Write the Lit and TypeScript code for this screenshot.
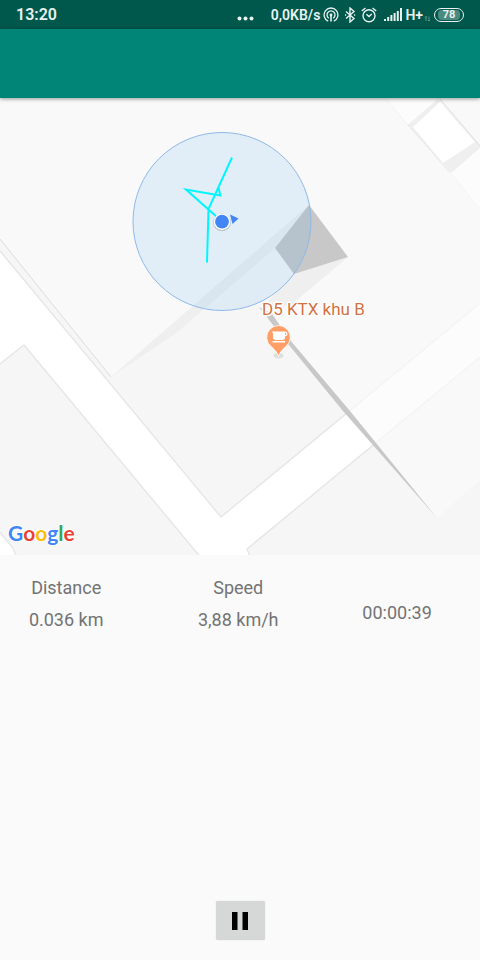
import { LitElement, html, css, svg } from "lit";
import { customElement, property, state } from "lit/decorators.js";

@customElement("status-bar")
class StatusBar extends LitElement {
  static styles = css`
    :host {
      display: flex;
      align-items: center;
      justify-content: space-between;
      height: 29px;
      padding: 0 16px;
      background: #00574b;
      color: #e8f2f0;
      font: 600 16px/20px Roboto, sans-serif;
      box-sizing: border-box;
    }
    .right {
      display: flex;
      align-items: center;
    }
    svg {
      display: block;
      fill: none;
      stroke: currentColor;
    }
    .solid {
      fill: currentColor;
      stroke: none;
    }
    .dots {
      margin-right: 17px;
    }
    .rate {
      font-size: 14px;
      margin-right: 3px;
    }
    .icons {
      display: flex;
      align-items: center;
      gap: 5px;
    }
    .signal {
      margin-left: 2px;
    }
    .net {
      font-size: 14px;
      margin-left: 3px;
    }
    .arrows {
      margin-right: 3px;
    }
    .battery {
      display: flex;
      align-items: center;
      justify-content: center;
      width: 30px;
      height: 14px;
      box-sizing: border-box;
      border: 1px solid currentColor;
      border-radius: 7px;
    }
    .charge {
      width: 22px;
      border-radius: 4px;
      background: #4a8a81;
      font-size: 11px;
      line-height: 10px;
      font-weight: 700;
      text-align: center;
    }
  `;

  render() {
    return html`
      <span>13:20</span>
      <div class="right">
        <svg class="dots solid" width="17" height="14" viewBox="0 0 17 14" aria-hidden="true">
          <circle cx="2.5" cy="10.5" r="2" /><circle cx="8.5" cy="10.5" r="2" /><circle cx="14.5" cy="10.5" r="2" />
        </svg>
        <span class="rate">0,0KB/s</span>
        <div class="icons">
          <svg width="16" height="16" viewBox="0 0 16 16" stroke-width="1.3" aria-hidden="true">
            <path d="M5.2 14.2a6.9 6.9 0 1 1 5.6 0" />
            <path d="M5.7 11.2a4 4 0 1 1 4.6 0" />
            <circle class="solid" cx="8" cy="8" r="1.4" />
            <path d="M8 9v5.5" stroke-width="1.6" />
          </svg>
          <svg width="12" height="16" viewBox="0 0 12 16" stroke-width="1.4" aria-hidden="true">
            <path d="M2 4.500 10 11.500 6 15V1l4 3.500L2 11.500" />
            <path d="M1 8h1.200M10 8h1.200" />
          </svg>
          <svg width="16" height="16" viewBox="0 0 16 16" stroke-width="1.4" aria-hidden="true">
            <circle cx="8" cy="8.7" r="6" />
            <path d="M.8 4 4.4 1M15.2 4 11.6 1" />
            <path d="M5.4 7.3 8 9.6l2.8-2.5" />
          </svg>
          <svg class="solid signal" width="18" height="13" viewBox="0 0 18 13" aria-hidden="true">
            <path d="M0 11h2v2H0zM3.2 9h2v4h-2zM6.4 7h2v6h-2zM9.6 5h2v8h-2zM12.8 3h2v10h-2zM16 0h2v13h-2z" />
          </svg>
        </div>
        <span class="net">H+</span>
        <svg class="arrows" width="8" height="14" viewBox="0 0 8 14" stroke-width="0.8" opacity="0.5" aria-hidden="true">
          <path d="M3 13V8.500M2 9.500l1-1 1 1M6 8.500V13M5 12l1 1 1-1" />
        </svg>
        <div class="battery"><span class="charge">78</span></div>
      </div>
    `;
  }
}

@customElement("track-map")
class TrackMap extends LitElement {
  static styles = css`
    :host {
      display: block;
    }
    .map {
      display: block;
      width: 100%;
      height: auto;
      background: #f6f6f6;
    }
    .road {
      fill: #fff;
      stroke: #e6e6e6;
      stroke-width: 1.4;
    }
    .wash {
      fill: #fbfbfb;
      fill-opacity: 0.68;
    }
    .shade {
      fill: #efefef;
    }
    .wall {
      fill: #c8c8c8;
    }
    .hair {
      fill: none;
      stroke: #dcdcdc;
    }
    .faint {
      fill: none;
      stroke: #f0f0f0;
    }
    .accuracy {
      fill: #3aa8ee;
      fill-opacity: 0.12;
      stroke: #8fb9e8;
    }
    .track {
      fill: none;
      stroke: #00f6ff;
      stroke-width: 2;
    }
    .blue {
      fill: #4285f4;
    }
    .place {
      font: 17px Roboto, sans-serif;
      fill: #d3723f;
      stroke: #fff;
      stroke-width: 3px;
      stroke-linejoin: round;
      paint-order: stroke;
    }
    .pin {
      fill: #ff9e67;
      stroke: #fff;
      stroke-width: 0.8;
    }
    .brand {
      font: 700 21px Lato, sans-serif;
      stroke: #fff;
      stroke-width: 2px;
      paint-order: stroke;
    }
    .b {
      fill: #4285f4;
    }
    .r {
      fill: #ea4335;
    }
    .y {
      fill: #fbbc05;
    }
    .g {
      fill: #34a853;
    }
  `;

  private ground() {
    return svg`
      <path class="road" d="M-2 248.600 221 517 482 301.400V355.400L247 549l4 10H202L24 345-2 365.500z" />
      <path class="road" d="M-2 530 13 548l4 10H-2z" />
      <path class="wash" d="M0 98H480V480L437 518 259 307 348 257 309 205 111 377 0 239z" />
      <path class="faint" d="M386 98 408 126M451 173 480 209" />
      <path fill="#fcfcfc" d="M386 98H438L408 125zM480 145V209L451 173z" />
      <path class="shade" d="M408 125 438 99 480 146V148L451 173z" />
      <path fill="#fff" d="M440 102 475 142 443 163 413 127z" />
      <path class="hair" stroke-dasharray="1 1" d="M408 125 450 173" />
      <path class="hair" d="M440 99 480 146" />
      <path class="hair" d="M0 239 111 377" />
      <path class="shade" d="M309 205 111 377 175 334 275 248zM294 274 348 257 290 306 262 308z" />
      <path class="wall" d="M309 205 348 257 294 274 275 248zM259 307 272 314 290 340 350 411 437 518 343 411 284 339z" />
    `;
  }

  private position() {
    return svg`
      <circle class="accuracy" cx="222" cy="221.500" r="89" />
      <path class="track" d="M232 157.500 208.500 209 207 262.500M222 221.500 186 189.500 220.300 195.600 218.500 187" />
      <path class="blue" d="M230 214.500 238.500 218.500 232.500 224z" />
      <circle cx="222" cy="222.300" r="9" fill="#000" fill-opacity="0.16" />
      <circle cx="222" cy="221.700" r="8.300" fill="#fff" />
      <circle class="blue" cx="222" cy="221.700" r="6.900" />
    `;
  }

  private labels() {
    return svg`
      <ellipse cx="278.500" cy="355.500" rx="5" ry="3" fill="#dedede" />
      <path class="pin" d="M278.500 357c-.8-4.500-3.500-6.500-7-10.200a11.800 11.800 0 1 1 14 0c-3.500 3.700-6.200 5.700-7 10.200z" />
      <path fill="#fff" d="M272 331.500h13v6c0 1.500-1.200 2.500-2.800 2.500h-6.400c-1.600 0-2.800-1-2.800-2.500v-5h-1zM272.500 341h12.500v1.600h-12.500z" />
      <path fill="none" stroke="#fff" stroke-width="1.200" d="M284 332.300h1.200a1.600 1.600 0 0 1 0 3.400H284" />
      <text class="place" x="262" y="315">D5 KTX khu B</text>
      <text class="brand" x="8" y="541"><tspan class="b">G</tspan><tspan class="r">o</tspan><tspan class="y">o</tspan><tspan class="b">g</tspan><tspan class="g">l</tspan><tspan class="r">e</tspan></text>
    `;
  }

  render() {
    return html`
      <svg class="map" viewBox="0 98 480 457" role="img" aria-label="Map of the recorded track">
        ${this.ground()} ${this.position()} ${this.labels()}
      </svg>
    `;
  }
}

@customElement("app-root")
class AppRoot extends LitElement {
  @property() distance = "0.036 km";
  @property() speed = "3,88 km/h";
  @property() elapsed = "00:00:39";
  @state() private paused = false;

  static styles = css`
    :host {
      display: flex;
      flex-direction: column;
      min-height: 100vh;
      background: #fafafa;
      color: #737373;
      font: 18px/24px Roboto, sans-serif;
    }
    .appbar {
      position: relative;
      height: 69px;
      background: #008577;
      box-shadow: 0 1px 4px rgba(0, 0, 0, 0.4);
    }
    .stats {
      display: grid;
      grid-template-columns: 5fr 8fr 4fr;
      align-items: center;
      margin: 0;
      padding: 21px 30px 0 0;
      text-align: center;
    }
    .stat {
      display: grid;
      gap: 8px;
    }
    dt,
    dd {
      margin: 0;
    }
    .time {
      padding-top: 18px;
    }
    .actions {
      display: flex;
      justify-content: center;
      margin-top: auto;
      padding: 20px;
    }
    .pause {
      display: grid;
      place-items: center;
      width: 49px;
      height: 39px;
      padding: 0;
      border: 0;
      border-radius: 2px;
      background: #d6d7d7;
      box-shadow: 0 0 1px #c4c4c4;
      cursor: pointer;
    }
  `;

  private toggle() {
    this.paused = !this.paused;
  }

  render() {
    return html`
      <status-bar></status-bar>
      <header class="appbar"></header>
      <track-map></track-map>
      <dl class="stats">
        <div class="stat"><dt>Distance</dt><dd>${this.distance}</dd></div>
        <div class="stat"><dt>Speed</dt><dd>${this.speed}</dd></div>
        <div class="time"><dd>${this.elapsed}</dd></div>
      </dl>
      <div class="actions">
        <button class="pause" aria-label=${this.paused ? "Resume" : "Pause"} @click=${this.toggle}>
          <svg width="16" height="18" viewBox="0 0 16 18" aria-hidden="true">
            <path d=${this.paused ? "M2 0 15 9 2 18z" : "M0 0h5.500v18H0zM10.500 0h5.500v18h-5.500z"} />
          </svg>
        </button>
      </div>
    `;
  }
}
